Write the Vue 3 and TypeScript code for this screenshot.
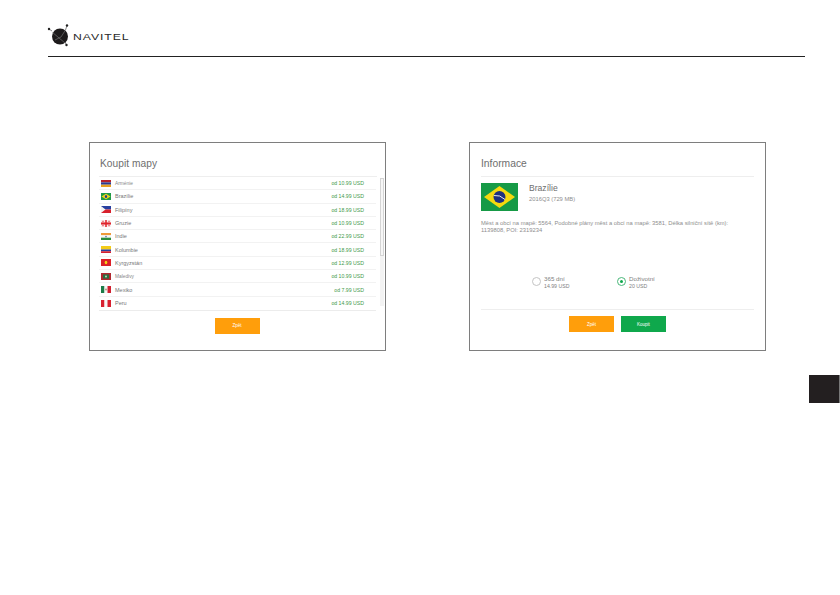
<script setup lang="ts">
interface Row { name: string; price: string; flag: string; small?: boolean }

const rect = (x: number, y: number, w: number, h: number, c: string) =>
  `<rect x="${x}" y="${y}" width="${w}" height="${h}" fill="${c}"/>`

const rows: Row[] = [
  { name: 'Arménie', price: 'od 10.99 USD', small: true, flag: rect(0, 0, 20, 3.4, '#b5202c') + rect(0, 3.4, 20, 3.3, '#2a3a92') + rect(0, 6.7, 20, 3.3, '#e8a020') },
  { name: 'Brazílie', price: 'od 14.99 USD', flag: rect(0, 0, 20, 10, '#1f9a48') + '<polygon points="10,1 19,5 10,9 1,5" fill="#f3d417"/><circle cx="10" cy="5" r="2.3" fill="#1f3f8c"/>' },
  { name: 'Filipíny', price: 'od 18.99 USD', flag: rect(0, 0, 20, 5, '#2840a0') + rect(0, 5, 20, 5, '#d8202c') + '<polygon points="0,0 9,5 0,10" fill="#f4f4f4"/>' },
  { name: 'Gruzie', price: 'od 10.99 USD', flag: rect(0, 0, 20, 10, '#f8f0f0') + rect(8.5, 0, 3, 10, '#e0242c') + rect(0, 3.5, 20, 3, '#e0242c') + rect(3, 1, 2, 2, '#e0242c') + rect(15, 1, 2, 2, '#e0242c') + rect(3, 7, 2, 2, '#e0242c') + rect(15, 7, 2, 2, '#e0242c') },
  { name: 'Indie', price: 'od 22.99 USD', flag: rect(0, 0, 20, 3.3, '#f09a3a') + rect(0, 3.3, 20, 3.4, '#f6f6f6') + rect(0, 6.7, 20, 3.3, '#2c8c3c') + '<circle cx="10" cy="5" r="1.2" fill="#30408c"/>' },
  { name: 'Kolumbie', price: 'od 18.99 USD', flag: rect(0, 0, 20, 5, '#f4cc18') + rect(0, 5, 20, 2.5, '#28409c') + rect(0, 7.5, 20, 2.5, '#d42030') },
  { name: 'Kyrgyzstán', price: 'od 12.99 USD', flag: rect(0, 0, 20, 10, '#dc2028') + '<circle cx="10" cy="5" r="2.6" fill="#f4d418"/>' },
  { name: 'Maledivy', price: 'od 10.99 USD', small: true, flag: rect(0, 0, 20, 10, '#b02830') + rect(4, 2, 12, 6, '#287040') + '<circle cx="10" cy="5" r="1.6" fill="#e8e8d8"/>' },
  { name: 'Mexiko', price: 'od 7.99 USD', flag: rect(0, 0, 7, 10, '#1c7c48') + rect(7, 0, 6, 10, '#f6f6f6') + rect(13, 0, 7, 10, '#d02030') + '<circle cx="10" cy="5" r="1.3" fill="#907040"/>' },
  { name: 'Peru', price: 'od 14.99 USD', flag: rect(0, 0, 7, 10, '#d82030') + rect(7, 0, 6, 10, '#f6f6f6') + rect(13, 0, 7, 10, '#d82030') },
]
</script>

<template>
  <div class="page">
    <header class="head">
      <svg class="logo" width="24" height="24" viewBox="0 0 24 24">
        <path d="M2 5 L5 7 M20 1.5 L18.5 6 M19.5 21 L18 18" fill="none" stroke="#555" stroke-width="0.7" />
        <circle cx="13" cy="12.5" r="8" fill="#1d1a1b" />
        <path d="M5 8 L18 19 M18.5 6 L14 13 L8 16" fill="none" stroke="#8f8f8f" stroke-width="0.5" />
        <circle cx="2" cy="5" r="1.2" fill="#222" />
        <circle cx="20" cy="1.5" r="1.2" fill="#222" />
        <circle cx="19.5" cy="21" r="1.2" fill="#222" />
      </svg>
      <span class="brand">NAVITEL</span>
    </header>

    <main class="cards">
      <section class="card">
        <h2 class="title big">Koupit mapy</h2>
        <div class="list-wrap">
          <ul class="list">
            <li v-for="r in rows" :key="r.name" class="row">
              <svg class="flag" viewBox="0 0 20 10" preserveAspectRatio="none" v-html="r.flag"></svg>
              <span class="name" :class="{ small: r.small }">{{ r.name }}</span>
              <span class="price">{{ r.price }}</span>
            </li>
          </ul>
          <div class="scroll"><div class="thumb"></div></div>
        </div>
        <div class="actions center">
          <button class="btn orange">Zpět</button>
        </div>
      </section>

      <section class="card info">
        <h2 class="title">Informace</h2>
        <div class="summary">
          <svg class="big-flag" viewBox="0 0 37 28">
            <rect width="37" height="28" fill="#169a46" />
            <polygon points="18.5,3 34,14 18.5,25 3,14" fill="#f5d90f" />
            <circle cx="18.5" cy="14" r="6" fill="#1e2f80" />
            <path d="M12.8 12.5 Q19 11.5 24 16.5" fill="none" stroke="#e8e8e8" stroke-width="1" />
          </svg>
          <div class="sum-text">
            <div class="country">Brazílie</div>
            <div class="ver">2016Q3 (729 MB)</div>
          </div>
        </div>
        <p class="desc">Měst a obcí na mapě: 5564, Podobné plány měst a obcí na mapě: 3581, Délka silniční sítě (km): 1139808, POI: 2319234</p>
        <div class="options">
          <div class="opt">
            <span class="radio"></span>
            <div>
              <div class="opt-name">365 dní</div>
              <div class="opt-price">14.99 USD</div>
            </div>
          </div>
          <div class="opt">
            <span class="radio on"></span>
            <div>
              <div class="opt-name">Doživotní</div>
              <div class="opt-price">20 USD</div>
            </div>
          </div>
        </div>
        <div class="actions end">
          <button class="btn orange">Zpět</button>
          <button class="btn green">Koupit</button>
        </div>
      </section>
    </main>

    <div class="tab-row"><div class="tab"></div></div>
  </div>
</template>

<style>
html, body { margin: 0; background: #fff; }
</style>

<style scoped>
.page {
  width: 840px;
  height: 595px;
  overflow: hidden;
  box-sizing: border-box;
  font-family: "Liberation Sans", Arial, sans-serif;
  color: #555;
}
.head {
  display: flex;
  align-items: flex-start;
  gap: 2px;
  box-sizing: border-box;
  height: 33px;
  margin: 24px 35px 0 48px;
  border-bottom: 1px solid #222;
}
.logo { margin-left: -1px; flex: none; }
.brand {
  font-size: 9.7px;
  line-height: 25px;
  letter-spacing: 0.75px;
  color: #2a2a2a;
  display: inline-block;
  transform: scaleX(1.26);
  transform-origin: left center;
}
.cards {
  display: flex;
  gap: 83px;
  margin: 85px 0 0 89px;
}
.card {
  width: 297px;
  height: 209px;
  box-sizing: border-box;
  border: 1px solid #7e7e7e;
  padding: 13px 0 0 9px;
  display: flex;
  flex-direction: column;
}
.title {
  margin: 0 8px 0 0;
  font-size: 10.3px;
  font-weight: 400;
  color: #6e6e6e;
  line-height: 15px;
  padding: 0 0 5px 1px;
  height: 21px;
  box-sizing: border-box;
  border-bottom: 1px solid #eee;
}
.title.big { font-size: 10.2px; letter-spacing: 0.05px; }
.list-wrap { display: flex; }
.list {
  list-style: none;
  margin: 0;
  padding: 0;
  width: 277px;
  flex: none;
  border-bottom: 1px solid #ececec;
}
.row {
  display: flex;
  align-items: center;
  height: 13.3px;
  box-sizing: border-box;
  padding: 0 12px 0 2px;
  border-bottom: 1px solid #f2f2f2;
}
.row:last-child { border-bottom: 0; }
.flag { width: 10px; height: 7px; flex: none; }
.name { margin-left: 4px; font-size: 5.5px; color: #777; flex: 1; }
.name.small { font-size: 4.8px; color: #888; }
.price { font-size: 5.2px; color: #3f9a4a; }
.scroll {
  margin: 1px 0 0 4px;
  width: 4px;
  height: 128px;
  background: #f3f3f3;
  position: relative;
}
.thumb {
  position: absolute;
  inset: 0 0 50px 0;
  box-sizing: border-box;
  border: 1px solid #d4d4d4;
  background: #f6f6f6;
}
.actions { display: flex; gap: 7px; }
.center { justify-content: center; margin-top: 7px; padding-right: 10px; }
.btn {
  width: 45px;
  height: 16px;
  padding: 0;
  border: 0;
  font: 4.5px "Liberation Sans", Arial, sans-serif;
  color: #fff;
}
.orange { background: #ff9e0b; }
.green { background: #0fa84c; }
.info { padding-left: 11px; padding-right: 3px; }
.info .title { padding-left: 0; }
.summary { display: flex; margin-top: 6px; }
.big-flag { width: 37px; height: 28px; flex: none; }
.sum-text { margin-left: 11px; }
.country { font-size: 8.6px; color: #6e6e6e; line-height: 10px; }
.ver { font-size: 5.8px; color: #8e8e8e; line-height: 8px; margin-top: 2px; }
.desc {
  margin: 9px 0 0 0;
  width: 252px;
  font-size: 5.8px;
  line-height: 7px;
  color: #8e8e8e;
}
.options {
  display: flex;
  margin: 42px 0 0 51px;
}
.opt { display: flex; width: 85px; gap: 3px; }
.radio {
  width: 9px;
  height: 9px;
  margin-top: 1px;
  box-sizing: border-box;
  border: 1px solid #c4c4c4;
  border-radius: 50%;
  flex: none;
  display: flex;
  align-items: center;
  justify-content: center;
}
.radio.on { border-color: #4ab87a; }
.radio.on::after {
  content: "";
  width: 3px;
  height: 3px;
  border-radius: 50%;
  background: #0fa84c;
}
.opt-name { font-size: 6.2px; line-height: 7px; margin-top: -1px; margin-bottom: 1px; color: #808080; }
.opt-price { font-size: 5.2px; line-height: 7px; color: #808080; }
.end {
  justify-content: center;
  margin-right: 8px;
  margin-top: 19px;
  padding-top: 6px;
  border-top: 1px solid #eee;
}
.tab-row { display: flex; justify-content: flex-end; margin-top: 24px; }
.tab {
  width: 30px;
  height: 28px;
  background: #231f20;
  border-right: 1px solid #777;
}
</style>
